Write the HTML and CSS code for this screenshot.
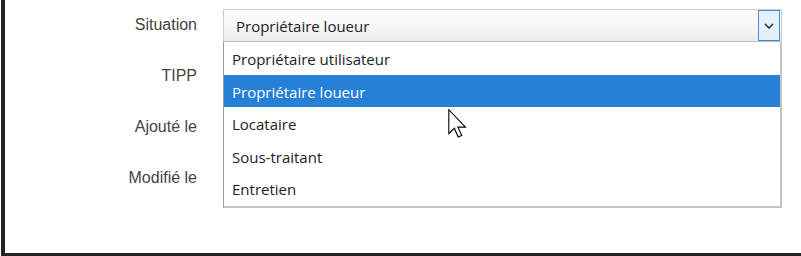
FILE: index.html
```html
<!DOCTYPE html>
<html lang="fr">
<head>
    <meta charset="UTF-8">
    <title>Situation</title>
    <link rel="stylesheet" href="styles.css">
</head>
<body>
    <div class="frame">
        <div class="form">
            <div class="row">
                <div class="label">Situation</div>
                <div class="field">
                    <div class="select">
                        <span class="value">Propriétaire loueur</span>
                        <span class="arrow">
                            <svg width="10" height="6" viewBox="0 0 10 6"><path d="M1 1 L5 5 L9 1" fill="none" stroke="#333" stroke-width="1.6"/></svg>
                        </span>
                    </div>
                    <ul class="list">
                        <li>Propriétaire utilisateur</li>
                        <li class="selected">Propriétaire loueur</li>
                        <li>Locataire</li>
                        <li>Sous-traitant</li>
                        <li>Entretien</li>
                    </ul>
                </div>
            </div>
            <div class="row"><div class="label">TIPP</div></div>
            <div class="row"><div class="label">Ajouté le</div></div>
            <div class="row"><div class="label">Modifié le</div></div>
        </div>
        <svg class="cursor" width="19" height="29" viewBox="0 0 13 20">
            <path d="M0.5 0.5 L0.5 17 L4.3 13.3 L7 19.3 L9.4 18.3 L6.8 12.5 L12 12.5 Z" fill="#fff" stroke="#000" stroke-width="0.75" stroke-linejoin="miter"/>
        </svg>
    </div>
</body>
</html>
```

FILE: styles.css
```css
* {
    margin: 0;
    padding: 0;
    box-sizing: border-box;
}

body {
    background: #fff;
    width: 801px;
    height: 256px;
    overflow: hidden;
}

.frame {
    position: relative;
    margin-left: 1px;
    height: 256px;
    border-left: 4px solid #232323;
    border-bottom: 3px solid #232323;
}

.form {
    padding-top: 10px;
}

.row {
    display: flex;
    align-items: flex-start;
    gap: 26px;
    height: 51px;
}

.row:first-child {
    margin-top: -1px;
}

.label {
    width: 192px;
    text-align: right;
    font-family: "Liberation Sans", Arial, sans-serif;
    font-size: 16px;
    line-height: 32px;
    color: #444;
}

.field {
    position: relative;
    width: 559px;
}

.select {
    display: flex;
    align-items: center;
    justify-content: space-between;
    height: 33px;
    padding: 1px 1px 1px 12px;
    border: 1px solid #cfcbc5;
    border-bottom-color: #bdbdbd;
    background: linear-gradient(#fff, #f6f6f6 55%, #ebebeb);
    font-family: "Open Sans", sans-serif;
    font-size: 15px;
    color: #222;
}

.arrow {
    display: flex;
    align-items: center;
    justify-content: center;
    width: 22px;
    height: 31px;
    border: 1px solid #3f8ede;
    background: #e5f0fb;
}

.list {
    position: absolute;
    top: 33px;
    left: 0;
    right: 0;
    list-style: none;
    background: #fff;
    border: 1px solid #9b9b9b;
    border-top: none;
    border-right: 2px solid #c4c4c4;
    border-bottom: 2px solid #c4c4c4;
    padding-bottom: 1px;
    font-family: "Open Sans", sans-serif;
    font-size: 15px;
    color: #222;
}

.list li {
    height: 32.5px;
    line-height: 34px;
    padding-left: 8px;
}

.list li.selected {
    background: #2680d7;
    color: #fff;
}

.cursor {
    position: absolute;
    left: 443px;
    top: 109px;
}
```
